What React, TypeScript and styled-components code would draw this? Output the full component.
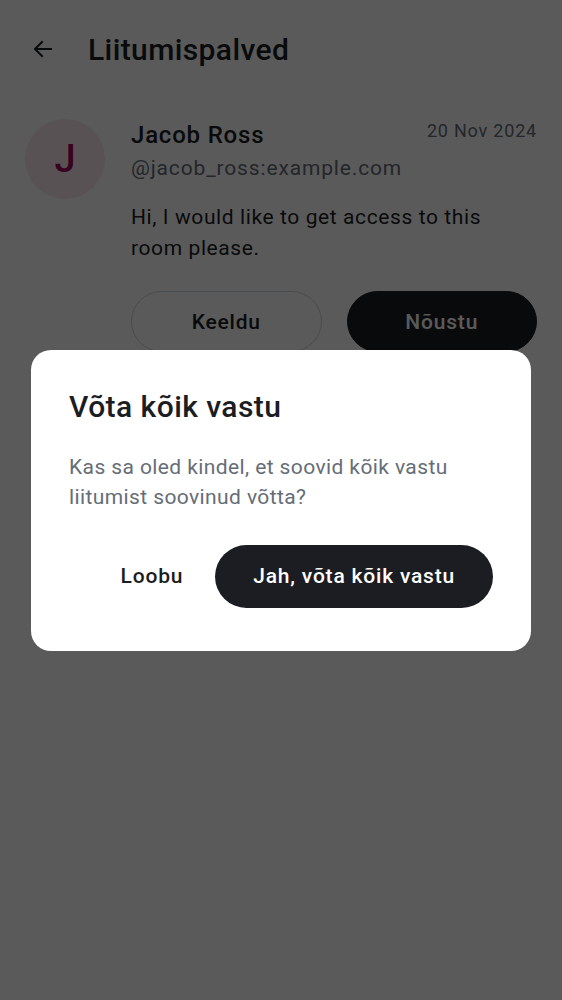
import React from "react";
import styled, { createGlobalStyle } from "styled-components";

const Global = createGlobalStyle`
  html, body { margin: 0; padding: 0; background: #ffffff; }
  body { font-family: Roboto, "Noto Sans", sans-serif; -webkit-font-smoothing: antialiased; }
  * { box-sizing: border-box; }
`;

const Page = styled.div`
  min-height: 1000px;
  background: #ffffff;
  color: #1b1d22;
`;

const TopBar = styled.header`
  display: flex;
  align-items: center;
  height: 98px;
  padding: 0 0 0 31px;
  gap: 33px;
`;

const BackButton = styled.button`
  display: flex;
  align-items: center;
  justify-content: center;
  width: 24px;
  height: 24px;
  padding: 0;
  border: none;
  background: none;
  color: #1b1d22;
`;

const Title = styled.h1`
  margin: 0;
  font-size: 30px;
  font-weight: 500;
  letter-spacing: 0.4px;
  color: #1b1d22;
`;

const Request = styled.div`
  display: flex;
  gap: 26px;
  padding: 21px 25px 0 25px;
`;

const Avatar = styled.div`
  flex: none;
  width: 80px;
  height: 80px;
  border-radius: 50%;
  background: #fce8ee;
  color: #a0045a;
  display: flex;
  align-items: center;
  justify-content: center;
  font-size: 38px;
  font-weight: 500;
`;

const Body = styled.div`
  flex: 1;
  display: flex;
  flex-direction: column;
`;

const NameRow = styled.div`
  display: flex;
  justify-content: space-between;
  align-items: flex-start;
`;

const Name = styled.div`
  font-size: 24px;
  font-weight: 500;
  line-height: 32px;
  letter-spacing: 0.8px;
  color: #1b1d22;
`;

const DateText = styled.div`
  font-size: 18px;
  line-height: 24px;
  color: #656d77;
  letter-spacing: 0.8px;
`;

const Handle = styled.div`
  font-size: 21px;
  line-height: 34px;
  letter-spacing: 0.85px;
  color: #656d77;
`;

const Message = styled.p`
  margin: 17px 0 0;
  font-size: 21px;
  line-height: 31px;
  letter-spacing: 0.6px;
  color: #1b1d22;
`;

const Actions = styled.div`
  display: grid;
  grid-template-columns: 1fr 1fr;
  gap: 25px;
  margin-top: 27px;
`;

const PillButton = styled.button<{ $filled?: boolean }>`
  height: 61px;
  border-radius: 31px;
  font-family: Roboto, "Noto Sans", sans-serif;
  font-size: 21px;
  font-weight: 500;
  letter-spacing: 0.8px;
  border: 1px solid ${(p) => (p.$filled ? "#1b1d22" : "#cdd3da")};
  background: ${(p) => (p.$filled ? "#1b1d22" : "#ffffff")};
  color: ${(p) => (p.$filled ? "#ffffff" : "#1b1d22")};
`;

const Scrim = styled.div`
  position: fixed;
  inset: 0;
  background: rgba(0, 0, 0, 0.647);
  display: flex;
  align-items: center;
  justify-content: center;
`;

const Dialog = styled.div`
  width: 500px;
  background: #ffffff;
  border-radius: 20px;
  padding: 38px 38px 43px 38px;
`;

const DialogTitle = styled.h2`
  margin: 0;
  font-size: 30px;
  font-weight: 500;
  line-height: 38px;
  letter-spacing: 0.45px;
  color: #1b1d22;
`;

const DialogText = styled.p`
  margin: 26px 0 0;
  font-size: 21px;
  line-height: 30px;
  letter-spacing: 0.4px;
  color: #656d77;
`;

const DialogActions = styled.div`
  display: flex;
  justify-content: flex-end;
  align-items: center;
  gap: 32px;
  margin-top: 33px;
`;

const TextButton = styled.button`
  border: none;
  background: none;
  padding: 0;
  font-family: Roboto, "Noto Sans", sans-serif;
  font-size: 21px;
  font-weight: 500;
  letter-spacing: 0.8px;
  color: #1b1d22;
`;

const PrimaryButton = styled.button`
  height: 63px;
  padding: 0 38px;
  border: none;
  border-radius: 32px;
  background: #1b1d22;
  color: #ffffff;
  font-family: Roboto, "Noto Sans", sans-serif;
  font-size: 21px;
  font-weight: 500;
  letter-spacing: 0.8px;
`;

export default function App() {
  return (
    <>
      <Global />
      <Page>
        <TopBar>
          <BackButton aria-label="Tagasi">
            <svg width="24" height="24" viewBox="0 0 24 24" fill="none">
              <path d="M20 12H4.5M11 5l-7 7 7 7" stroke="currentColor" strokeWidth="2" strokeLinecap="square" />
            </svg>
          </BackButton>
          <Title>Liitumispalved</Title>
        </TopBar>
        <Request>
          <Avatar>J</Avatar>
          <Body>
            <NameRow>
              <Name>Jacob Ross</Name>
              <DateText>20 Nov 2024</DateText>
            </NameRow>
            <Handle>@jacob_ross:example.com</Handle>
            <Message>Hi, I would like to get access to this room please.</Message>
            <Actions>
              <PillButton>Keeldu</PillButton>
              <PillButton $filled>Nõustu</PillButton>
            </Actions>
          </Body>
        </Request>
      </Page>
      <Scrim>
        <Dialog>
          <DialogTitle>Võta kõik vastu</DialogTitle>
          <DialogText>Kas sa oled kindel, et soovid kõik vastu liitumist soovinud võtta?</DialogText>
          <DialogActions>
            <TextButton>Loobu</TextButton>
            <PrimaryButton>Jah, võta kõik vastu</PrimaryButton>
          </DialogActions>
        </Dialog>
      </Scrim>
    </>
  );
}
